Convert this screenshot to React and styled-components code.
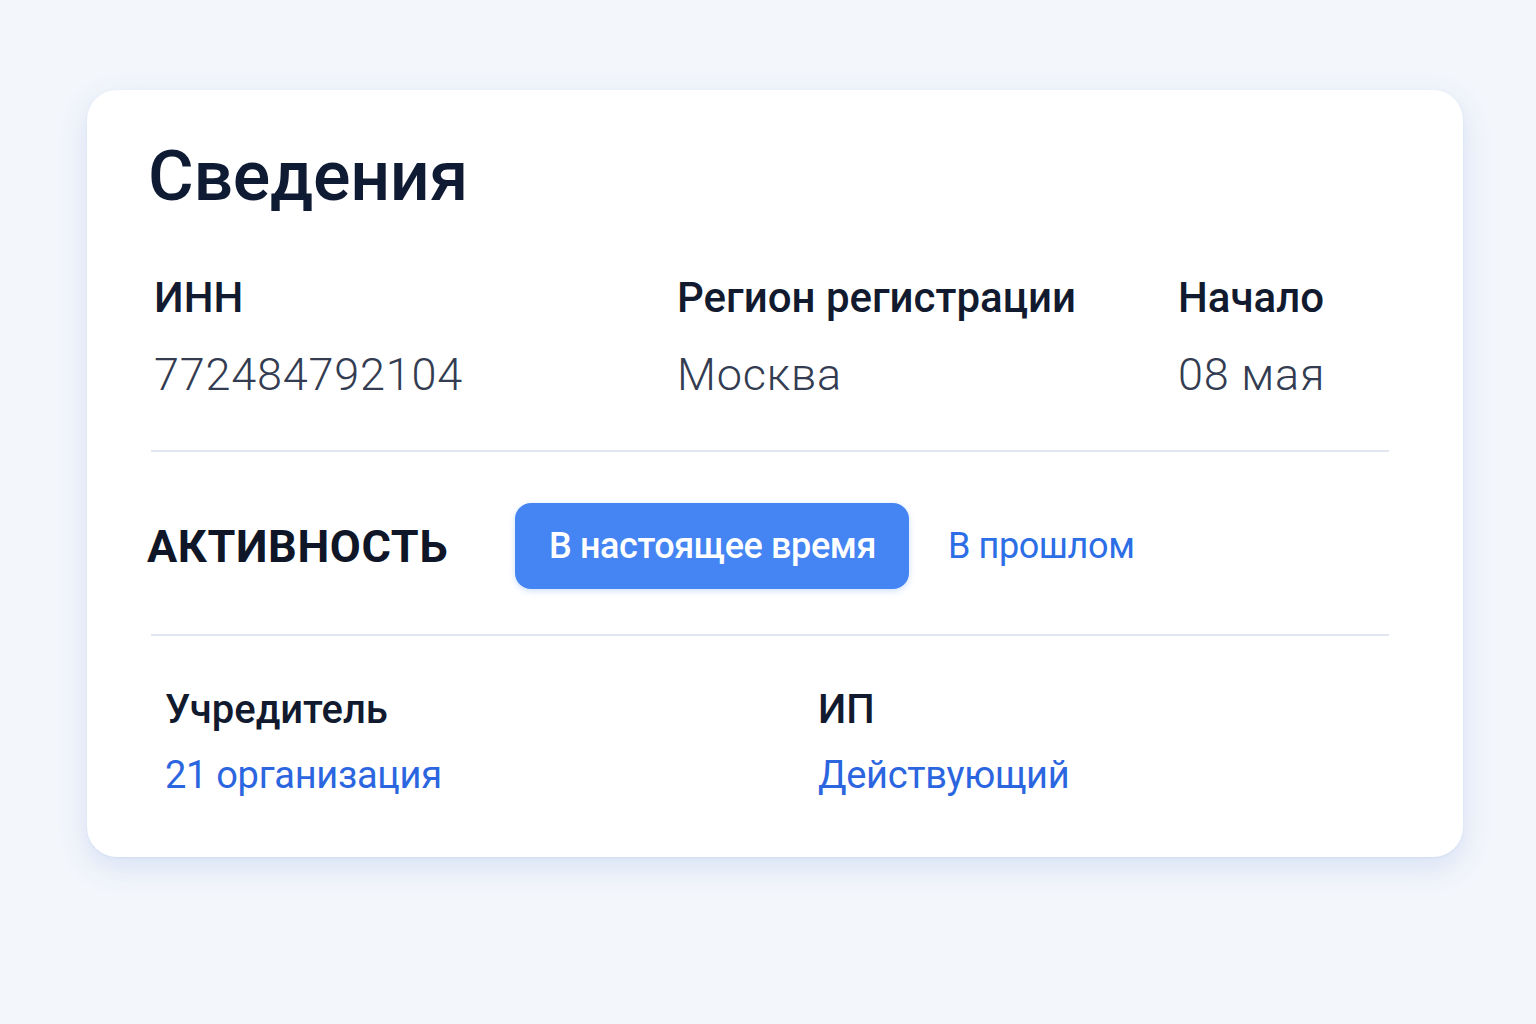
import React from "react";
import styled, {createGlobalStyle} from "styled-components";

const GlobalStyle = createGlobalStyle`
    html, body {
        margin: 0;
        padding: 0;
        background: #f3f6fb;
    }
    body {
        font-family: Roboto, "Noto Sans", "Liberation Sans", sans-serif;
        -webkit-font-smoothing: antialiased;
    }
`;

const info = [
    {label: "ИНН", value: "772484792104"},
    {label: "Регион регистрации", value: "Москва"},
    {label: "Начало", value: "08 мая"},
];

const extra = [
    {label: "Учредитель", value: "21 организация"},
    {label: "ИП", value: "Действующий"},
];

export default function App() {
    return (
        <Page>
            <GlobalStyle/>
            <Card>
                <Title>Сведения</Title>

                <InfoRow>
                    {info.map(item => (
                        <InfoCell key={item.label}>
                            <Label>{item.label}</Label>
                            <Value>{item.value}</Value>
                        </InfoCell>
                    ))}
                </InfoRow>

                <Divider/>

                <ActivityRow>
                    <ActivityTitle>Активность</ActivityTitle>
                    <Tab active>В настоящее время</Tab>
                    <Tab>В прошлом</Tab>
                </ActivityRow>

                <Divider/>

                <ExtraRow>
                    {extra.map(item => (
                        <InfoCell key={item.label} gap={17}>
                            <Label small>{item.label}</Label>
                            <LinkValue href="#">{item.value}</LinkValue>
                        </InfoCell>
                    ))}
                </ExtraRow>
            </Card>
        </Page>
    );
}

const Page = styled.div`
    min-height: 1024px;
    padding: 90px 73px 0 87px;
    box-sizing: border-box;
`;

const Card = styled.div`
    width: 1376px;
    height: 767px;
    box-sizing: border-box;
    padding: 44px 74px 0 64px;
    background: #ffffff;
    border-radius: 30px;
    box-shadow: 0 10px 30px rgba(70, 120, 210, 0.16), 0 1px 3px rgba(70, 120, 210, 0.08);
`;

const Title = styled.h1`
    margin: 0 0 0 -3px;
    font-size: 70px;
    line-height: 84px;
    font-weight: 500;
    color: #0f1a33;
    letter-spacing: -0.3px;
`;

const InfoRow = styled.div`
    display: grid;
    grid-template-columns: 523px 501px 1fr;
    margin-top: 56px;
    margin-bottom: 49px;
    padding-left: 3px;
`;

const InfoCell = styled.div`
    display: flex;
    flex-direction: column;
    gap: ${props => props.gap || 27}px;
`;

const Label = styled.div`
    font-size: ${props => props.small ? 40 : 42}px;
    line-height: 48px;
    font-weight: 500;
    color: #111a2e;
`;

const Value = styled.div`
    font-size: 45px;
    line-height: 52px;
    font-weight: 300;
    color: #333c51;
    letter-spacing: 0.8px;
`;

const Divider = styled.div`
    height: 2px;
    background: #dfe6f0;
`;

const ActivityRow = styled.div`
    display: flex;
    align-items: center;
    height: 182px;
    box-sizing: border-box;
    padding-top: 6px;
    margin-left: -4px;
`;

const ActivityTitle = styled.div`
    width: 368px;
    font-size: 45px;
    font-weight: 700;
    text-transform: uppercase;
    color: #0f1628;
    letter-spacing: 0.6px;
`;

const Tab = styled.div`
    height: 86px;
    display: flex;
    align-items: center;
    padding: 0 33px 0 34px;
    margin-right: 5px;
    border-radius: 16px;
    font-size: 36px;
    letter-spacing: -0.4px;
    color: ${props => props.active ? "#ffffff" : "#2b6ee6"};
    background: ${props => props.active ? "#4585f3" : "transparent"};
    font-weight: ${props => props.active ? 500 : 400};
    box-shadow: ${props => props.active ? "0 2px 6px rgba(68, 135, 244, 0.25)" : "none"};
`;

const ExtraRow = styled.div`
    display: grid;
    grid-template-columns: 653px 1fr;
    margin-top: 50px;
    padding-left: 14px;
`;

const LinkValue = styled.a`
    font-size: 38px;
    line-height: 48px;
    letter-spacing: -0.3px;
    color: #2b66e0;
    text-decoration: none;
`;
